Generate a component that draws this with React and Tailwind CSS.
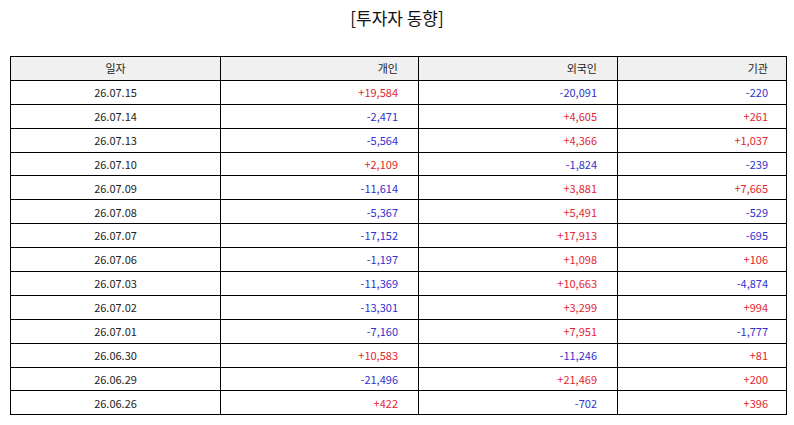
import React from "react";

const rows = [
  ["26.07.15", "+19,584", "-20,091", "-220"],
  ["26.07.14", "-2,471", "+4,605", "+261"],
  ["26.07.13", "-5,564", "+4,366", "+1,037"],
  ["26.07.10", "+2,109", "-1,824", "-239"],
  ["26.07.09", "-11,614", "+3,881", "+7,665"],
  ["26.07.08", "-5,367", "+5,491", "-529"],
  ["26.07.07", "-17,152", "+17,913", "-695"],
  ["26.07.06", "-1,197", "+1,098", "+106"],
  ["26.07.03", "-11,369", "+10,663", "-4,874"],
  ["26.07.02", "-13,301", "+3,299", "+994"],
  ["26.07.01", "-7,160", "+7,951", "-1,777"],
  ["26.06.30", "+10,583", "-11,246", "+81"],
  ["26.06.29", "-21,496", "+21,469", "+200"],
  ["26.06.26", "+422", "-702", "+396"],
];

const tone = (v) => (v.startsWith("+") ? "text-[#e2262f]" : "text-[#3030cc]");

export default function App() {
  return (
    <div className="w-[794px] h-[425px] bg-white px-[10px] pt-[6px] font-['Noto_Sans_CJK_KR','Noto_Sans',sans-serif] text-[#222]">
      <h1 className="text-center text-[17px] leading-[24px] text-[#111] mb-[26px]">[투자자 동향]</h1>

      <table className="w-[776px] border-collapse text-[11px] table-fixed">
        <colgroup>
          <col className="w-[210px]" />
          <col className="w-[198px]" />
          <col className="w-[199px]" />
          <col className="w-[169px]" />
        </colgroup>
        <thead>
          <tr className="bg-[#f0f0f0] h-[23.9px]">
            <th className="border border-black font-normal text-center">일자</th>
            <th className="border border-black font-normal text-right pr-[20px]">개인</th>
            <th className="border border-black font-normal text-right pr-[20px]">외국인</th>
            <th className="border border-black font-normal text-right pr-[18px]">기관</th>
          </tr>
        </thead>
        <tbody>
          {rows.map((r) => (
            <tr key={r[0]} className="h-[23.9px]">
              <td className="border border-black text-center">{r[0]}</td>
              <td className={`border border-black text-right pr-[20px] ${tone(r[1])}`}>{r[1]}</td>
              <td className={`border border-black text-right pr-[20px] ${tone(r[2])}`}>{r[2]}</td>
              <td className={`border border-black text-right pr-[18px] ${tone(r[3])}`}>{r[3]}</td>
            </tr>
          ))}
        </tbody>
      </table>
    </div>
  );
}
